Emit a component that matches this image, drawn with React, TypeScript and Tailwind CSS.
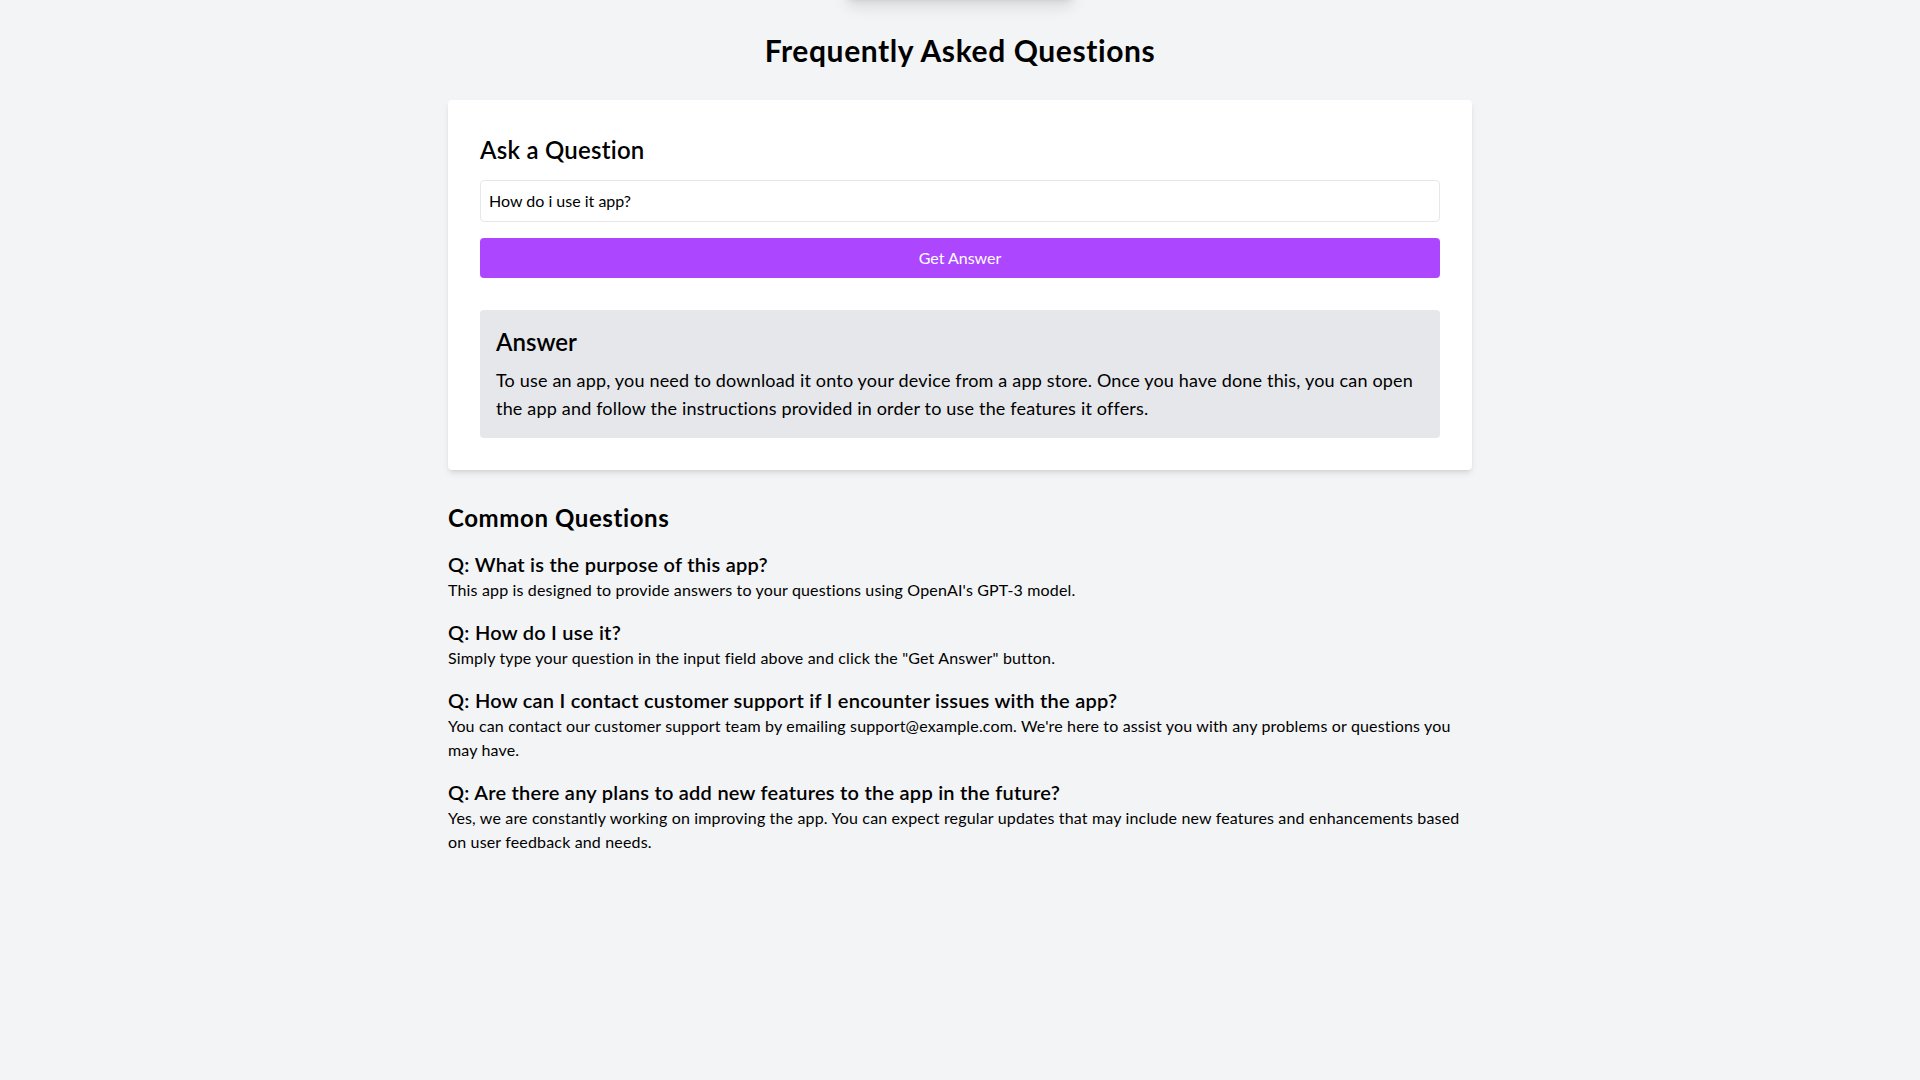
import React, { useState } from 'react';

const FAQS = [
    {
        q: 'Q: What is the purpose of this app?',
        a: "This app is designed to provide answers to your questions using OpenAI's GPT-3 model.",
    },
    {
        q: 'Q: How do I use it?',
        a: 'Simply type your question in the input field above and click the "Get Answer" button.',
    },
    {
        q: 'Q: How can I contact customer support if I encounter issues with the app?',
        a: "You can contact our customer support team by emailing support@example.com. We're here to assist you with any problems or questions you may have.",
    },
    {
        q: 'Q: Are there any plans to add new features to the app in the future?',
        a: 'Yes, we are constantly working on improving the app. You can expect regular updates that may include new features and enhancements based on user feedback and needs.',
    },
];

export default function App() {
    const [question, setQuestion] = useState('How do i use it app?');

    return (
        <div className="relative min-h-screen bg-gray-100 text-black font-['Lato','Open_Sans',sans-serif]">
            <div className="absolute left-1/2 -top-10 h-10 w-[232px] -translate-x-1/2 rounded-lg bg-white shadow-lg" />
            <div className="mx-auto max-w-5xl py-8">
                <h1 className="mb-8 text-center text-3xl font-bold tracking-[0.02em]">Frequently Asked Questions</h1>
                <div className="rounded bg-white p-8 shadow-md">
                    <h2 className="mb-4 pt-0.5 text-2xl font-semibold tracking-[0.01em]">Ask a Question</h2>
                    <input
                        className="-mt-0.5 w-full rounded border border-gray-200 p-2 text-base text-black outline-none"
                        value={question}
                        onChange={(e) => setQuestion(e.target.value)}
                    />
                    <button className="mt-4 w-full rounded bg-purple-500 py-2 text-base text-white">Get Answer</button>
                    <div className="mt-8 rounded bg-gray-200 p-4">
                        <h3 className="text-2xl font-semibold">Answer</h3>
                        <p className="mt-2 text-lg tracking-[0.01em]">
                            To use an app, you need to download it onto your device from a app store. Once you have done
                            this, you can open the app and follow the instructions provided in order to use the features
                            it offers.
                        </p>
                    </div>
                </div>
                <div className="mt-8">
                    <h2 className="mb-4 text-2xl font-bold tracking-[0.025em]">Common Questions</h2>
                    <div className="space-y-4">
                        {FAQS.map((item) => (
                            <div key={item.q}>
                                <h3 className="text-xl font-semibold tracking-[0.0125em]">{item.q}</h3>
                                <p className="text-base tracking-[0.01em]">{item.a}</p>
                            </div>
                        ))}
                    </div>
                </div>
            </div>
        </div>
    );
}
